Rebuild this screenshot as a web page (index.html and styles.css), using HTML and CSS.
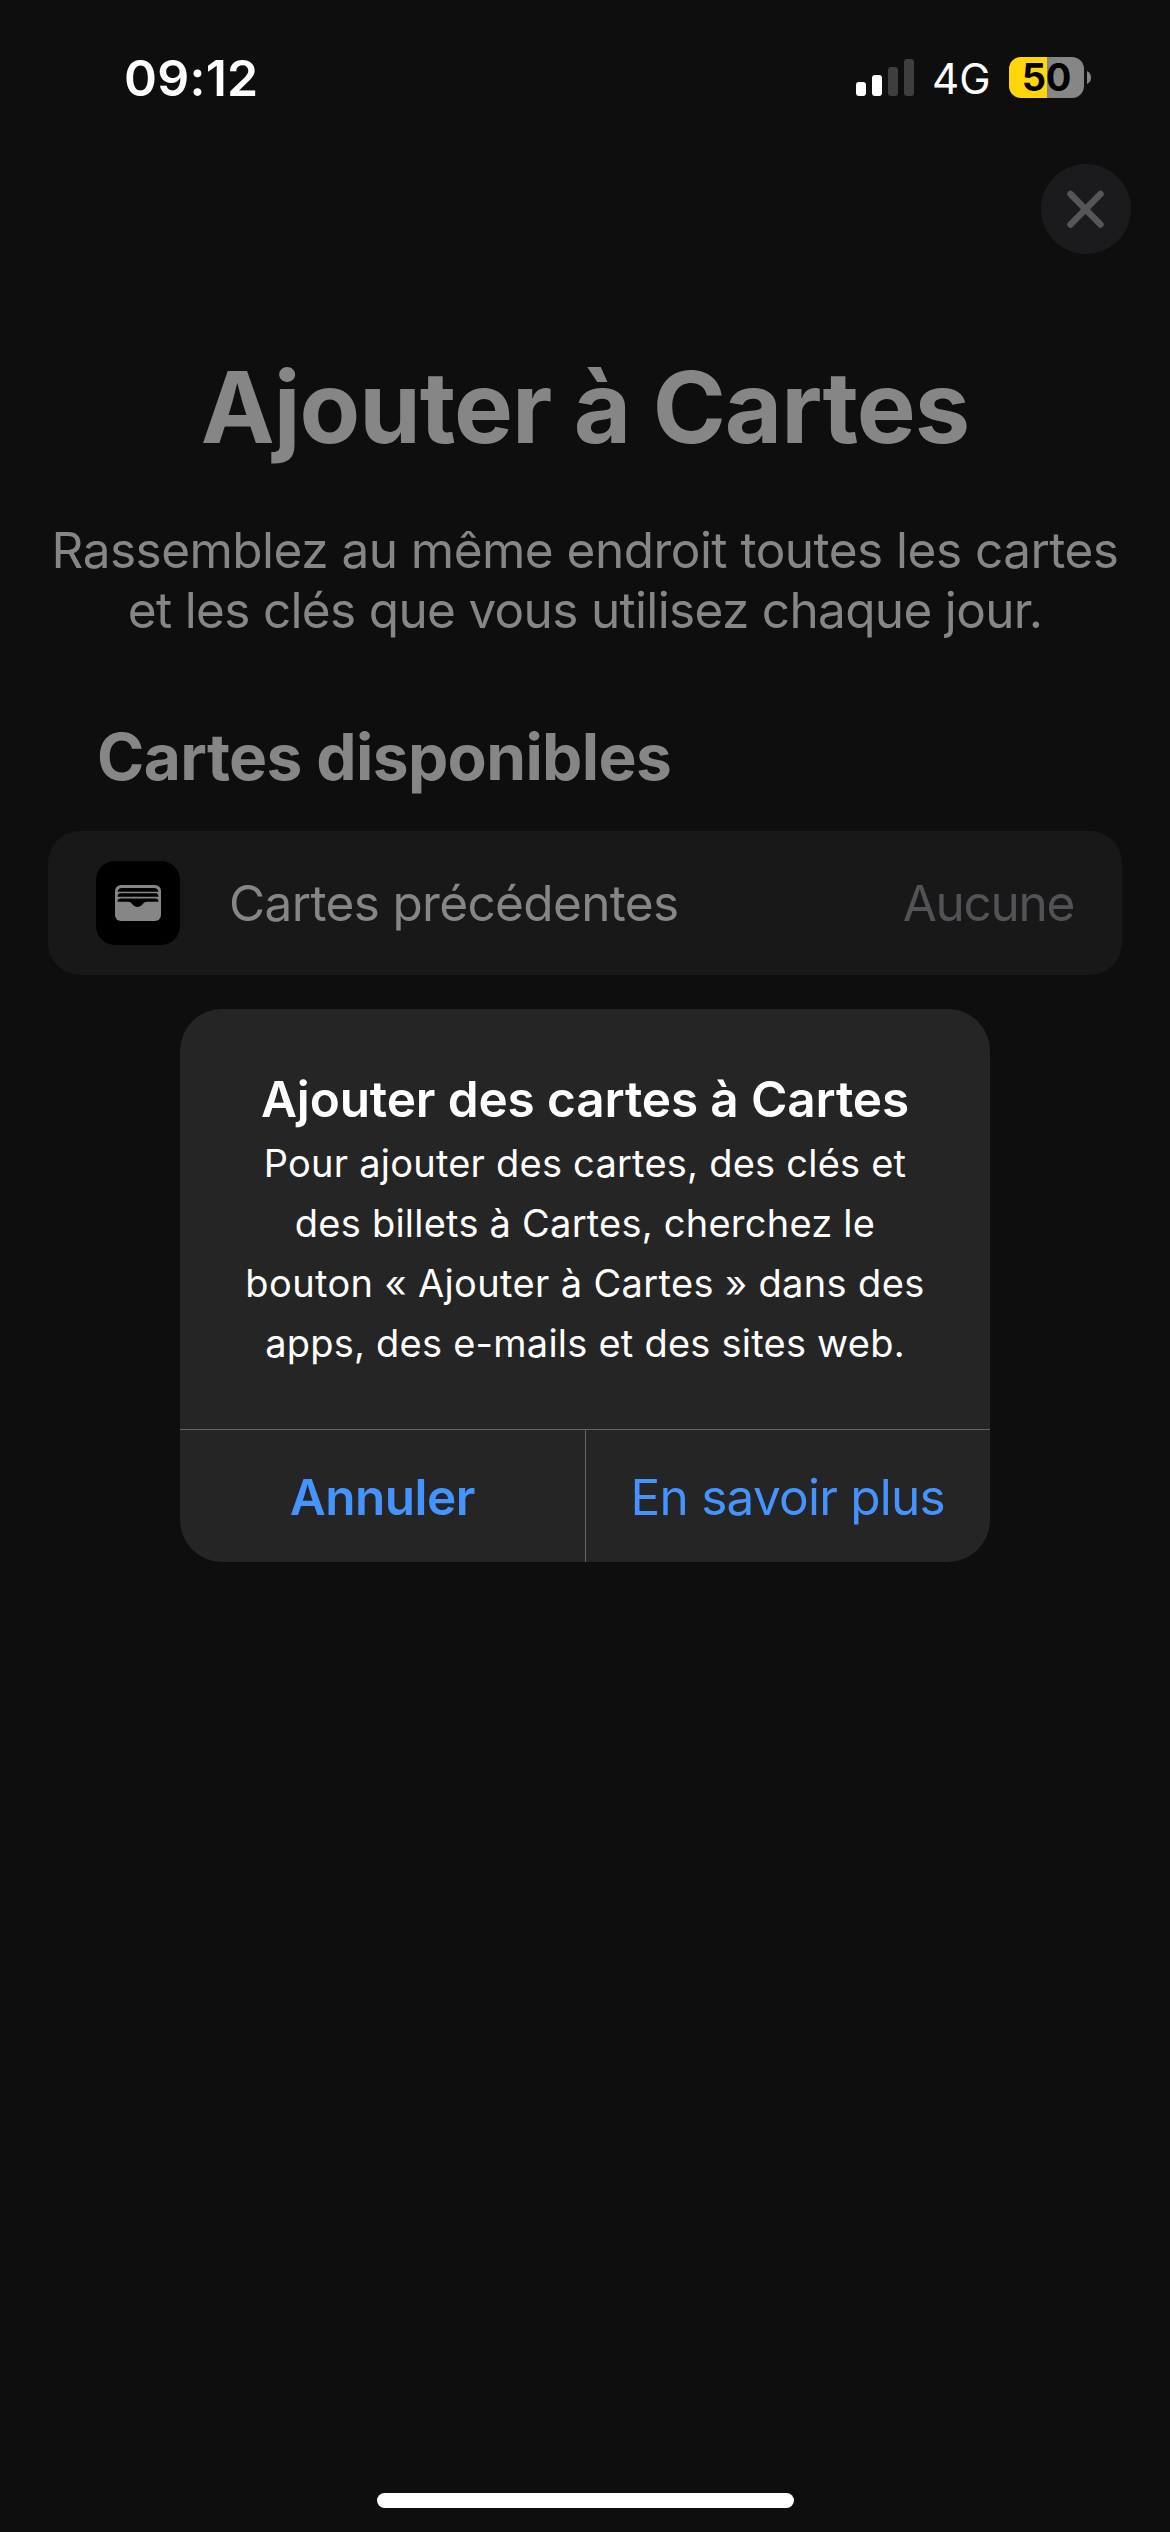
FILE: index.html
```html
<!DOCTYPE html>
<html lang="fr">
<head>
<meta charset="utf-8">
<meta name="viewport" content="width=device-width">
<title>Ajouter à Cartes</title>
<link rel="stylesheet" href="styles.css">
</head>
<body>
<div class="screen">
  <header class="status">
    <time class="clock">09:12</time>
    <div class="indicators">
      <svg class="signal" viewBox="0 0 58 38" aria-hidden="true">
        <g fill="#fff">
          <rect x="0" y="23" width="10" height="14" rx="3"/>
          <rect x="16" y="16" width="10" height="21" rx="3"/>
        </g>
        <g fill="#3e3e3e">
          <rect x="32" y="8" width="10" height="29" rx="3"/>
          <rect x="48" y="0" width="10" height="37" rx="3"/>
        </g>
      </svg>
      <span class="network">4G</span>
      <div class="battery"><span class="battery-level">50</span></div>
      <svg class="battery-cap" viewBox="0 0 4 13" aria-hidden="true"><path d="M0 0Q4 2 4 6.500Q4 11 0 13Z" fill="#868686"/></svg>
    </div>
  </header>

  <button class="close" aria-label="Fermer">
    <svg viewBox="0 0 90 90" aria-hidden="true"><path d="M29.500 30L59.500 60.500M59.500 30L29.500 60.500" stroke="#56565a" stroke-width="6.500" stroke-linecap="round"/></svg>
  </button>

  <main class="content">
    <h1 class="title">Ajouter à Cartes</h1>
    <p class="intro">
      <span class="intro-line">Rassemblez au même endroit toutes les cartes</span>
      <span class="intro-line intro-line-tight">et les clés que vous utilisez chaque jour.</span>
    </p>
    <h2 class="section">Cartes disponibles</h2>
    <div class="row">
      <div class="app-icon">
        <svg viewBox="0 0 46 36" aria-hidden="true">
          <rect width="46" height="36" rx="6" fill="#868686"/>
          <path d="M2.500 6.800Q3 3 7 3H39Q43 3 43.500 6.800Z" fill="#000"/>
          <path d="M2.500 11.800Q2.500 8.200 5.500 8.200H40.500Q43.500 8.200 43.500 11.800Z" fill="#000"/>
          <path d="M2.500 16.800Q2.500 13.400 5.500 13.400H40.500Q43.500 13.400 43.500 16.800H32C29.500 16.800 28.800 17.800 27.500 19.500C24.800 22.800 20.200 22.800 17.500 19.500C16.200 17.800 15.500 16.800 13 16.800Z" fill="#000"/>
        </svg>
      </div>
      <span class="row-label">Cartes précédentes</span>
      <span class="row-value">Aucune</span>
    </div>
  </main>

  <div class="home-indicator"></div>

  <div class="overlay">
    <section class="alert" role="alertdialog">
      <div class="alert-body">
        <h3 class="alert-title">Ajouter des cartes à Cartes</h3>
        <p class="alert-text">Pour ajouter des cartes, des clés et<br>des billets à Cartes, cherchez le<br><span class="quoted">bouton «&nbsp;Ajouter à Cartes&nbsp;» dans des</span><br>apps, des e-mails et des sites web.</p>
      </div>
      <div class="alert-actions">
        <button class="action action-cancel">Annuler</button>
        <button class="action">En savoir plus</button>
      </div>
    </section>
  </div>
</div>
</body>
</html>
```
FILE: styles.css
```css
* { box-sizing: border-box; margin: 0; padding: 0; }

body {
  background: #0e0e0e;
  color: #868686;
  font-family: Inter, "Liberation Sans", sans-serif;
}

button { border: 0; background: none; font: inherit; }
svg { display: block; }

.screen {
  position: relative;
  display: flex;
  flex-direction: column;
  width: 1170px;
  height: 2532px;
  overflow: hidden;
}

/* Status bar */
.status {
  display: flex;
  justify-content: space-between;
  height: 164px;
  padding: 48px 79px 0 124px;
  color: #fff;
}
.clock {
  font-size: 50px;
  font-weight: 600;
  line-height: 60px;
  letter-spacing: 0.24px;
}
.indicators {
  display: flex;
  align-items: center;
  height: 59px;
}
.signal { width: 58px; height: 38px; }
.network {
  margin-left: 18px;
  width: 77px;
  font-size: 42px;
  line-height: 56px;
  padding-top: 2px;
}
.battery {
  width: 75px;
  height: 41px;
  border-radius: 12px;
  background: linear-gradient(90deg, #ffd60a 38px, #868686 38px);
  text-align: center;
}
.battery-level {
  display: block;
  color: #000;
  font-size: 38px;
  font-weight: 700;
  line-height: 41px;
  letter-spacing: -0.3px;
}
.battery-cap { width: 4px; height: 13px; margin-left: 3px; }

.close {
  align-self: flex-end;
  width: 90px;
  height: 90px;
  margin-right: 39px;
  border-radius: 50%;
  background: #1b1b1d;
}

/* Page content */
.content {
  display: flex;
  flex-direction: column;
  padding: 93px 48px 0;
}
.title {
  font-size: 99px;
  font-weight: 700;
  line-height: 120px;
  letter-spacing: -1.02px;
  text-align: center;
}
.intro {
  display: flex;
  flex-direction: column;
  align-items: center;
  margin-top: 53px;
  font-size: 49.5px;
  line-height: 60px;
  white-space: nowrap;
}
.intro-line { letter-spacing: -0.52px; }
.intro-line-tight { letter-spacing: -0.67px; }
.section {
  margin: 77px 0 34px 49px;
  font-size: 64px;
  font-weight: 700;
  line-height: 80px;
  letter-spacing: -0.64px;
}
.row {
  display: flex;
  align-items: center;
  height: 144px;
  padding: 0 48px;
  border-radius: 32px;
  background: #181818;
  font-size: 49.5px;
}
.app-icon {
  display: grid;
  place-items: center;
  width: 84px;
  height: 84px;
  border-radius: 19px;
  background: #000;
}
.app-icon svg { width: 46px; height: 36px; }
.row-label {
  flex: 1;
  margin-left: 49px;
  letter-spacing: -0.65px;
}
.row-value { color: #535357; letter-spacing: -1.3px; }

.home-indicator {
  width: 417px;
  height: 15px;
  margin: auto auto 24px 377px;
  border-radius: 8px;
  background: #fff;
}

/* Alert */
.overlay {
  position: absolute;
  inset: 0;
  display: flex;
  flex-direction: column;
  align-items: center;
  padding-top: 1009px;
}
.alert {
  width: 810px;
  height: 553px;
  display: flex;
  flex-direction: column;
  overflow: hidden;
  border-radius: 42px;
  background: #252525;
}
.alert-body {
  flex: 1;
  padding-top: 60px;
  color: #fff;
  text-align: center;
  white-space: nowrap;
}
.alert-title {
  font-size: 49.5px;
  font-weight: 600;
  line-height: 60px;
  letter-spacing: -0.13px;
}
.alert-text {
  margin-top: 4px;
  font-size: 38px;
  line-height: 60px;
  letter-spacing: 0.23px;
}
.quoted { letter-spacing: 0.36px; }
.alert-actions {
  display: flex;
  height: 133px;
  border-top: 1px solid #666;
}
.action {
  flex: 1 1 0;
  padding-top: 1px;
  color: #4593ff;
  font-size: 49.5px;
  letter-spacing: -0.75px;
}
.action + .action { border-left: 1px solid #666; }
.action-cancel { font-weight: 600; letter-spacing: -0.52px; }
```
